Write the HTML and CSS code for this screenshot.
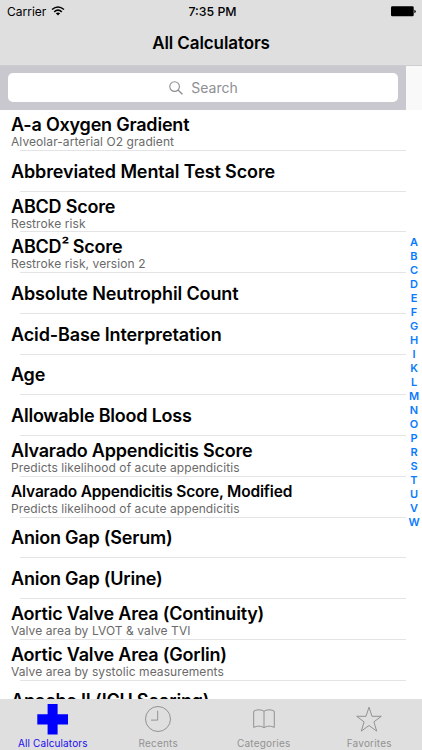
FILE: index.html
```html
<!DOCTYPE html>
<html lang="en">
<head>
<meta charset="utf-8">
<title>All Calculators</title>
<link rel="stylesheet" href="styles.css">
</head>
<body>
<div class="phone">
  <header>
    <div class="status">
      <div class="carrier"><span>Carrier</span>
        <svg width="14" height="10" viewBox="0 0 14 10" fill="none" stroke="#000" stroke-width="1.6"><path d="M1 3.5Q7-1.5 13 3.5M3.2 5.8Q7 2.5 10.8 5.8"/><path d="M4.8 7.3Q7 5.5 9.2 7.3L7 9.6z" fill="#000" stroke="none"/></svg>
      </div>
      <div class="time">7:35 PM</div>
      <div class="power"><svg width="25" height="11" viewBox="0 0 25 11"><rect width="22.7" height="10" y=".3" rx="1.3"/><path d="M23.4 3.8q1.4.5 1.4 1.7t-1.4 1.7z"/></svg></div>
    </div>
    <h1>All Calculators</h1>
  </header>
  <main>
    <div class="table">
      <div class="searchbar"><div class="field">
        <svg width="14" height="14" viewBox="0 0 14 14" fill="none" stroke="#8e8e93" stroke-width="1.1"><circle cx="5.6" cy="5.6" r="4.8"/><path d="M9 9l4.4 4.2" stroke-width="1.4"/></svg>
        <span>Search</span></div></div>
      <ul class="list">
        <li><b>A-a Oxygen Gradient</b><small>Alveolar-arterial O2 gradient</small></li>
        <li><b class="wide">Abbreviated Mental Test Score</b></li>
        <li><b>ABCD Score</b><small>Restroke risk</small></li>
        <li><b>ABCD<span class="square">²</span> Score</b><small>Restroke risk, version 2</small></li>
        <li><b class="wide">Absolute Neutrophil Count</b></li>
        <li><b class="wide">Acid-Base Interpretation</b></li>
        <li><b>Age</b></li>
        <li><b>Allowable Blood Loss</b></li>
        <li><b>Alvarado Appendicitis Score</b><small>Predicts likelihood of acute appendicitis</small></li>
        <li><b class="fit">Alvarado Appendicitis Score, Modified</b><small>Predicts likelihood of acute appendicitis</small></li>
        <li><b>Anion Gap (Serum)</b></li>
        <li><b>Anion Gap (Urine)</b></li>
        <li><b>Aortic Valve Area (Continuity)</b><small>Valve area by LVOT &amp; valve TVI</small></li>
        <li><b>Aortic Valve Area (Gorlin)</b><small>Valve area by systolic measurements</small></li>
        <li><b>Apache II (ICU Scoring)</b></li>
      </ul>
    </div>
    <nav class="index"><span>A</span><span>B</span><span>C</span><span>D</span><span>E</span><span>F</span><span>G</span><span>H</span><span>I</span><span>K</span><span>L</span><span>M</span><span>N</span><span>O</span><span>P</span><span>R</span><span>S</span><span>T</span><span>U</span><span>V</span><span>W</span></nav>
  </main>
  <footer>
    <div class="tab active"><svg width="32" height="34" viewBox="0 0 32 34"><path fill="#00f" d="M10.600 2h10v10.300H31v10.100H20.600V32.400h-10V22.400H.300V12.300H10.600z"/></svg><span>All Calculators</span></div>
    <div class="tab"><svg width="32" height="34" viewBox="0 0 32 34"><circle cx="16" cy="17" r="12.500"/><path d="M15.700 8.700v9.400H9"/></svg><span>Recents</span></div>
    <div class="tab"><svg width="32" height="34" viewBox="0 0 32 34"><path d="M16 9.300C14 7.300 8 7.300 5.700 9.200V25.500C8.500 23.700 14 23.700 16 26C18 23.700 23.500 23.700 26.300 25.500V9.200C24 7.300 18 7.300 16 9.300V26"/></svg><span>Categories</span></div>
    <div class="tab"><svg width="32" height="34" viewBox="0 0 32 34"><path d="M16 5.200L19 14.300H28.300L20.900 19.900L23.700 29.100L16 23.500L8.300 29.100L11.100 19.900L3.700 14.300H13z"/></svg><span>Favorites</span></div>
  </footer>
</div>
</body>
</html>
```
FILE: styles.css
```css
* { box-sizing: border-box; }
body { margin: 0; font-family: Inter, "Liberation Sans", sans-serif; color: #000; }
.phone { width: 422px; height: 750px; display: flex; flex-direction: column; overflow: hidden; background: #fff; }
svg { display: block; flex: none; }
header { height: 66px; flex: none; background: #dfdfdf; border-bottom: 1px solid #cdcdd0; }
.status { height: 22px; display: grid; grid-template-columns: 1fr auto 1fr; align-items: center; padding: 0 6px 0 7px; font-size: 12px; }
.carrier { display: flex; align-items: center; gap: 5px; }
.time { font-weight: 500; font-size: 12.3px; padding-left: 2px; }
.power { display: flex; justify-content: flex-end; }
h1 { margin: 0; font-size: 17px; line-height: 43px; font-weight: 600; text-align: center; letter-spacing: -.1px; }
main { flex: 1; min-height: 0; display: flex; overflow: hidden; }
.table { width: 406px; flex: none; }
.searchbar { height: 44px; padding: 7px 8px 8px; background: #c9c8cf; }
.field { height: 29px; border-radius: 5px; background: #fff; display: flex; align-items: center; justify-content: center; gap: 8px; color: #8e8e93; font-size: 14px; padding-left: 1px; }
.list { list-style: none; margin: 0; padding: 0; }
.list li { height: 40.75px; padding: 1px 0 0 11px; display: flex; flex-direction: column; justify-content: center; white-space: nowrap; background: linear-gradient(#e4e4e6, #e4e4e6) 20px 100% / 100% 1px no-repeat; }
.list b { font-size: 18px; line-height: 22px; font-weight: 600; letter-spacing: -.21px; align-self: flex-start; }
.list .wide { letter-spacing: -.12px; }
.list .fit { font-size: 15.5px; letter-spacing: -.18px; }
.list b:not(:last-child) { padding-top: .4px; }
.list .square { display: inline-block; line-height: 1; font-size: 17px; transform: translateY(-2px); letter-spacing: -.6px; }
.list small { font-size: 12px; line-height: 13px; color: #6a6a6a; letter-spacing: .08px; margin-top: -1px; align-self: flex-start; }
.index { flex: 1; padding-top: 169px; display: flex; flex-direction: column; align-items: center; background: linear-gradient(#f9f9fa, #f9f9fa) 0 0 / 100% 44px no-repeat; color: #0a7aff; font-size: 11px; font-weight: 600; }
.index span { height: 14px; line-height: 14px; flex: none; }
footer { height: 51px; flex: none; display: flex; background: #dfdfdf; }
.tab { flex: 1; display: flex; flex-direction: column; align-items: center; padding-top: 3px; color: #929292; font-size: 10px; line-height: 14px; letter-spacing: .2px; }
.tab svg { fill: none; stroke: #929292; stroke-width: 1; }
.tab.active { color: #1a0bef; letter-spacing: .12px; }
.active svg { stroke: none; }
```
